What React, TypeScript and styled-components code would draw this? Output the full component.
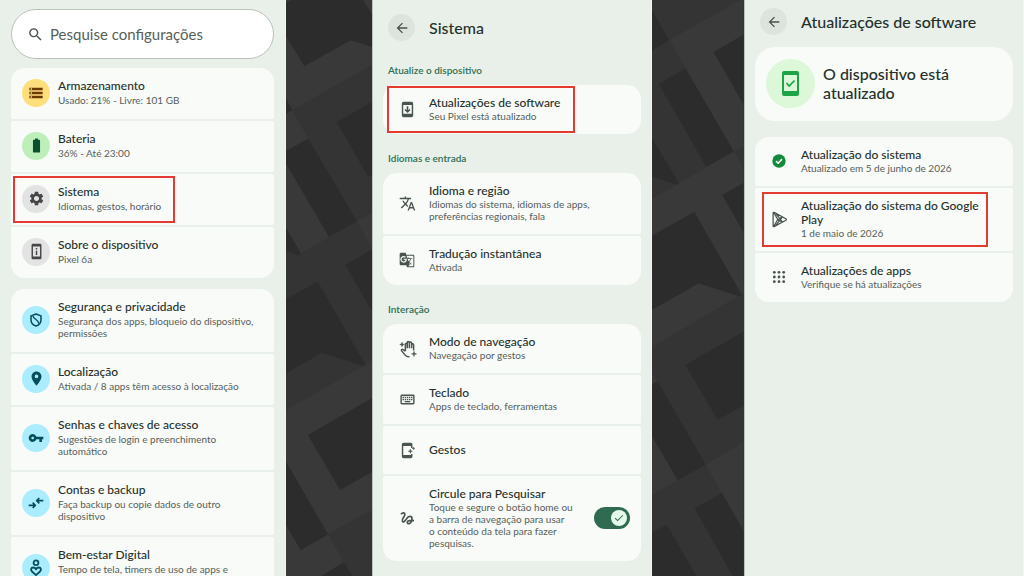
import React from "react";
import styled, { createGlobalStyle, css } from "styled-components";
import {
  MdArrowBack,
  MdBatteryFull,
  MdGTranslate,
  MdOutlineKeyboard,
  MdPermDeviceInformation,
  MdPlace,
  MdSearch,
  MdSettings,
  MdStorage,
  MdTranslate,
  MdVpnKey,
} from "react-icons/md";

const GlobalStyle = createGlobalStyle`
  *, *::before, *::after { box-sizing: border-box; }
  body {
    margin: 0;
    background: #2b2b2b;
    font-family: Lato, "Open Sans", sans-serif;
    color: #26302b;
  }
`;

/* ---------- layout ---------- */

const Page = styled.main`
  display: grid;
  grid-template-columns: 286fr 86fr 280fr 92fr 280fr;
  height: 100vh;
  overflow: hidden;
`;

const Panel = styled.section<{ $top: number; $edge?: boolean }>`
  min-width: 0;
  overflow: hidden;
  background: #e8f0e9;
  padding: ${(p) => p.$top}px ${(p) => (p.$edge ? 10 : 11)}px 0;
  border-right: 1px solid #eff7f0;
  ${(p) => p.$edge && css`border-left: 1px solid #b9c4bc;`}
`;

const Strip = styled.div`
  min-width: 0;
  overflow: hidden;
  svg { display: block; width: 100%; height: 100%; }
`;

/* ---------- search ---------- */

const SearchBox = styled.label`
  display: flex;
  align-items: center;
  gap: 6px;
  height: 50px;
  padding: 0 15px;
  border: 1px solid #b9c1bb;
  border-radius: 25px;
  background: #fff;
  color: #4b554f;
  margin-bottom: 9px;
`;

const SearchInput = styled.input`
  flex: 1;
  min-width: 0;
  padding: 0;
  border: 0;
  outline: 0;
  background: none;
  font: 400 15px/20px Lato, "Open Sans", sans-serif;
  color: inherit;
  &::placeholder { color: #56605a; opacity: 1; }
`;

/* ---------- headers ---------- */

const Header = styled.header`
  display: flex;
  align-items: center;
  gap: 14px;
  padding-left: 5px;
`;

const BackButton = styled.button`
  display: grid;
  place-items: center;
  width: 27px;
  height: 27px;
  padding: 0;
  border: 0;
  border-radius: 50%;
  background: #dce4dd;
  color: #48524c;
`;

const Title = styled.h1`
  margin: 0;
  font-size: 16px;
  line-height: 19px;
  font-weight: 500;
`;

const SectionLabel = styled.h2`
  margin: 18px 0 9px;
  padding-left: 5px;
  font-size: 10px;
  line-height: 12px;
  font-weight: 600;
  color: #2f6e53;
`;

/* ---------- lists ---------- */

const Group = styled.ul`
  display: flex;
  flex-direction: column;
  gap: 2px;
  margin: 0 0 11px;
  padding: 0;
  list-style: none;
`;

const Stack = styled.div`
  display: flex;
  flex-direction: column;
  padding-top: 5px;
  > ul { margin-bottom: 0; }
`;

const Item = styled.li`
  position: relative;
  border-radius: 2px;
  background: #f8fbf8;
  &:first-child {
    border-top-left-radius: 14px;
    border-top-right-radius: 14px;
  }
  &:last-child {
    border-bottom-left-radius: 14px;
    border-bottom-right-radius: 14px;
  }
`;

const rowLayout = css<{ $wide?: boolean }>`
  display: flex;
  align-items: center;
  width: 100%;
  border: 0;
  background: none;
  text-align: left;
  font: inherit;
  color: inherit;
  gap: ${(p) => (p.$wide ? 8 : 14)}px;
  padding: ${(p) => (p.$wide ? "11px 14px 13px 11px" : "11px 11px 12px 16px")};
`;

const RowButton = styled.button<{ $wide?: boolean }>`
  ${rowLayout}
`;

const RowLabel = styled.label<{ $wide?: boolean }>`
  ${rowLayout}
`;

const RowText = styled.span<{ $gap?: boolean }>`
  display: flex;
  flex-direction: column;
  justify-content: center;
  flex: 1;
  min-width: 0;
  min-height: 25px;
  gap: ${(p) => (p.$gap ? 1 : 0)}px;
`;

const RowTitle = styled.span`
  font-size: 12px;
  line-height: 14px;
  font-weight: 500;
`;

const RowSub = styled.span<{ $lines?: number }>`
  min-height: ${(p) => (p.$lines ?? 1) * 12}px;
  font-size: 10px;
  line-height: 12px;
  color: #56605a;
`;

const Plain = styled.span`
  display: grid;
  place-items: center;
  flex: none;
  width: 16px;
  height: 16px;
  color: #4b554f;
`;

const Badge = styled.span<{ $bg: string; $fg: string }>`
  display: grid;
  place-items: center;
  flex: none;
  width: 28px;
  height: 28px;
  margin: -1px 0;
  border-radius: 50%;
  background: ${(p) => p.$bg};
  color: ${(p) => p.$fg};
`;

const Marker = styled.span<{ $x: number; $y: number; $w: number }>`
  position: absolute;
  top: ${(p) => p.$y}px;
  bottom: ${(p) => p.$y}px;
  left: ${(p) => p.$x}px;
  width: ${(p) => p.$w}px;
  border: 2px solid #e53a2f;
  pointer-events: none;
`;

const Switch = styled.input`
  appearance: none;
  position: relative;
  flex: none;
  width: 36px;
  height: 22px;
  margin: 0;
  border-radius: 11px;
  background: #2e6b51;
  &::before {
    content: "";
    position: absolute;
    top: 3px;
    right: 3px;
    width: 16px;
    height: 16px;
    border-radius: 50%;
    background: #e6faec;
  }
  &::after {
    content: "";
    position: absolute;
    top: 8px;
    right: 7px;
    width: 8px;
    height: 4px;
    border: solid #2e6b51;
    border-width: 0 0 1px 1px;
    transform: rotate(-45deg);
  }
`;

const StatusCard = styled.div`
  display: flex;
  align-items: center;
  gap: 8px;
  min-height: 74px;
  margin: 12px 0 16px;
  padding: 10px 11px 12px;
  border-radius: 20px;
  background: #f8fbf8;
`;

const StatusIcon = styled.span`
  display: grid;
  place-items: center;
  flex: none;
  width: 49px;
  height: 49px;
  border-radius: 50%;
  background: #dcf8d8;
`;

const StatusText = styled.p`
  margin: 0;
  max-width: 150px;
  font-size: 16px;
  line-height: 19px;
  font-weight: 500;
`;

/* ---------- icons ---------- */

const Svg = ({ size = 16, children }: { size?: number; children: React.ReactNode }) => (
  <svg
    width={size}
    height={size}
    viewBox="0 0 24 24"
    fill="none"
    stroke="currentColor"
    strokeWidth="2"
    strokeLinejoin="round"
    aria-hidden="true"
  >
    {children}
  </svg>
);

const ShieldIcon = () => (
  <Svg>
    <path d="M12 3 19.500 5.800V11.500C19.500 16 16.500 19.700 12 21C7.500 19.700 4.500 16 4.500 11.500V5.800Z" strokeWidth="2.300" />
    <path d="M7.500 6C8 11 15.500 11 16.500 17.500" />
  </Svg>
);

const TransferIcon = () => (
  <Svg>
    <path d="M1 15.500H10.500M7 11.500 11 15.500 7 19.500M23 8.500H13.500M17 4.500 13 8.500 17 12.500" strokeWidth="2.400" />
  </Svg>
);

const WellbeingIcon = () => (
  <Svg size={18}>
    <circle cx="12" cy="5" r="3.200" strokeWidth="2.400" />
    <path
      d="M12 21.500 7 17C4.500 14.800 5.200 11.300 8.200 11.300C10 11.300 11.300 12.300 12 13.800C12.700 12.300 14 11.300 15.800 11.300C18.800 11.300 19.500 14.800 17 17Z"
      strokeWidth="2.400"
    />
  </Svg>
);

const PhoneUpdateIcon = () => (
  <Svg size={17}>
    <rect x="5" y="2" width="14" height="20" rx="1.500" />
    <path d="M5 4H19M5 19.500H19" strokeWidth="3" />
    <path d="M12 7.500V15M8.500 12 12 15.500 15.500 12" strokeWidth="2.200" />
  </Svg>
);

const HandIcon = () => (
  <Svg size={18}>
    <path
      d="M8.500 15V5.500A1.300 1.300 0 0 1 11 5.500V11M11 11V3.500A1.300 1.300 0 0 1 13.800 3.500V11M13.800 11V4A1.300 1.300 0 0 1 16.800 4V11M16.800 11V6.500A1.300 1.300 0 0 1 19.500 6.500V14M8.500 15 5.500 12.800C4 11.800 2.500 13 3.500 14.500L8.500 20.500C9.500 21.700 11 22.500 14 22.300"
      strokeWidth="2"
    />
    <path
      d="M4 3 4.900 5.100 7 6 4.900 6.900 4 9 3.100 6.900 1 6 3.100 5.100ZM20 15 20.900 17.600 23.500 18.500 20.900 19.400 20 22 19.100 19.400 16.500 18.500 19.100 17.600Z"
      fill="currentColor"
      strokeWidth="0.600"
    />
  </Svg>
);

const PhoneGestureIcon = () => (
  <Svg size={17}>
    <path d="M18 8.500V3.500A1.500 1.500 0 0 0 16.500 2H6.500A1.500 1.500 0 0 0 5 3.500V20.500A1.500 1.500 0 0 0 6.500 22H16.500A1.500 1.500 0 0 0 18 20.500V17" />
    <path d="M5 4H18M5 20H18" strokeWidth="3" />
    <path
      d="M16 10 16.900 12.300 19 13 16.900 13.800 16 16 15.100 13.800 13 13 15.100 12.300ZM20.500 7 21 8.500 22.500 9 21 9.500 20.500 11 20 9.500 18.500 9 20 8.500Z"
      fill="currentColor"
      strokeWidth="0.600"
    />
  </Svg>
);

const ScribbleIcon = () => (
  <Svg size={16}>
    <path
      d="M3 6.500C5 4 8.500 3.500 8.800 6.500C9 9.500 4 13 5 16.500C6 19.500 9.500 16.500 11.500 13C14 8.500 19.500 8.500 19.500 13C19.500 17.500 16.500 21 14 20.500C11.500 20 12 16 16 16H22.500"
      strokeWidth="2.600"
    />
  </Svg>
);

const PlayIcon = () => (
  <Svg size={17}>
    <path
      d="M3 3C3 2 4 1.800 5 2.300L21 11C22 11.600 22 12.400 21 13L5 21.700C4 22.200 3 22 3 21ZM4 2.500 9.500 12 4 21.500M9.500 12 16 8.500M9.500 12 16 15.500M7 4 16 15.500M7 20 16 8.500"
      strokeWidth="1.800"
    />
  </Svg>
);

const CheckBadgeIcon = () => (
  <Svg size={16}>
    <circle cx="12" cy="12" r="10" fill="#128a3a" stroke="none" />
    <path d="M7.500 12.300 10.700 15.300 16.500 9.200" stroke="#fff" strokeWidth="2.400" />
  </Svg>
);

const AppsIcon = () => (
  <Svg size={16}>
    {[5, 12, 19].map((y) =>
      [5, 12, 19].map((x) => (
        <circle key={`${x}-${y}`} cx={x} cy={y} r="2.100" fill="currentColor" stroke="none" />
      )),
    )}
  </Svg>
);

const PhoneCheckIcon = () => (
  <svg width="17" height="27" viewBox="0 0 17 27" aria-hidden="true">
    <rect x="0" y="1" width="17" height="25" rx="2" fill="#1ea446" />
    <rect x="2" y="5" width="13" height="16" fill="#dcf8d8" />
    <path d="M4.500 13.200 7.200 16 12.500 10.500" fill="none" stroke="#1ea446" strokeWidth="1.800" />
  </svg>
);

/* ---------- backdrop art ---------- */

const Art = ({ box, light, dark }: { box: string; light: string; dark: string }) => (
  <Strip aria-hidden="true">
    <svg viewBox={box} preserveAspectRatio="xMinYMin slice">
      <rect width="400" height="1728" fill="#343434" />
      <path d={light} fill="#393939" />
      <path d={dark} fill="#2c2c2c" />
    </svg>
  </Strip>
);

const LEFT_LIGHT =
  "M18 0H36L18 8ZM250 0H276V44ZM18 108 73 198 212 121 276 140V194L37 330 18 296ZM18 341 37 330 85 416 18 453ZM18 490 147 711 62 760 18 683ZM276 638 231 664 276 745ZM18 1230 276 1084V1195L84 1305 180 1470 276 1415V1530L144 1603 18 1385ZM18 1574 62 1650 144 1603 192 1687 124 1728H18Z";
const LEFT_DARK =
  "M18 8 36 0H250L276 44V140L212 121 73 198 18 108ZM276 306 170 366 265 531 276 525ZM18 453 85 416 231 664 147 711 18 490ZM18 296 37 330 18 341ZM18 683 62 760 57 767 18 753ZM276 748 196 795 276 934ZM18 898 113 845 257 1095 250 1098 127 1058 18 1120ZM84 1305 276 1195V1415L180 1470ZM18 1385 144 1603 62 1650 18 1574ZM192 1687 217 1728H124Z";
const RIGHT_LIGHT =
  "M72 120 285 0H294V105L205 156 294 312V440L265 454ZM20 597 265 454 294 504V549L231 585 294 696V880L290 886 147 636 20 707ZM20 929 160 850 280 888 20 1040ZM20 1118 37 1144 20 1152ZM20 1308 97 1440 20 1486ZM294 1326 181 1394 230 1479 294 1592Z";
const RIGHT_DARK =
  "M20 31 72 120 20 151ZM294 105 205 156 294 312ZM120 205 265 454 183 501 40 252ZM20 413 100 549 94 554 20 530ZM294 549 231 585 294 696ZM20 707 147 636 290 886 280 888 160 850 20 929ZM294 995 120 1095 217 1260 294 1216ZM20 1152 37 1144 181 1394 97 1440 20 1308ZM230 1479 147 1525 262 1728H294V1592ZM20 1598 64 1574 153 1728H20Z";

/* ---------- rows ---------- */

type RowProps = {
  icon: React.ReactNode;
  title: string;
  sub?: string;
  lines?: number;
  tint?: [string, string];
  marker?: [number, number, number];
};

const Row = ({ icon, title, sub, lines, tint, marker }: RowProps) => (
  <Item>
    <RowButton type="button" $wide={!!tint}>
      {tint ? (
        <Badge $bg={tint[0]} $fg={tint[1]}>{icon}</Badge>
      ) : (
        <Plain>{icon}</Plain>
      )}
      <RowText $gap={!!tint}>
        <RowTitle>{title}</RowTitle>
        {sub && <RowSub $lines={lines}>{sub}</RowSub>}
      </RowText>
    </RowButton>
    {marker && <Marker $x={marker[0]} $y={marker[1]} $w={marker[2]} />}
  </Item>
);

const BLUE: [string, string] = ["#abedff", "#064e5c"];
const GREY: [string, string] = ["#e2e3e2", "#444746"];

export default function App() {
  return (
    <>
      <GlobalStyle />
      <Page>
        <Panel $top={9}>
          <SearchBox>
            <MdSearch size={17} />
            <SearchInput type="search" placeholder="Pesquise configurações" aria-label="Pesquise configurações" />
          </SearchBox>
          <Group>
            <Row icon={<MdStorage size={16} />} title="Armazenamento" sub="Usado: 21% - Livre: 101 GB" tint={["#ffdf7c", "#6b3a00"]} />
            <Row icon={<MdBatteryFull size={17} />} title="Bateria" sub="36% - Até 23:00" tint={["#beefbb", "#0b5130"]} />
            <Row icon={<MdSettings size={17} />} title="Sistema" sub="Idiomas, gestos, horário" tint={GREY} marker={[2, 2, 162]} />
            <Row icon={<MdPermDeviceInformation size={17} />} title="Sobre o dispositivo" sub="Pixel 6a" tint={GREY} />
          </Group>
          <Group>
            <Row icon={<ShieldIcon />} title="Segurança e privacidade" sub="Segurança dos apps, bloqueio do dispositivo, permissões" tint={BLUE} />
            <Row icon={<MdPlace size={17} />} title="Localização" sub="Ativada / 8 apps têm acesso à localização" tint={BLUE} />
            <Row icon={<MdVpnKey size={16} />} title="Senhas e chaves de acesso" sub="Sugestões de login e preenchimento automático" tint={BLUE} />
            <Row icon={<TransferIcon />} title="Contas e backup" sub="Faça backup ou copie dados de outro dispositivo" tint={BLUE} />
            <Row icon={<WellbeingIcon />} title="Bem-estar Digital" sub="Tempo de tela, timers de uso de apps e" lines={2} tint={BLUE} />
          </Group>
        </Panel>

        <Art box="18 0 258 1728" light={LEFT_LIGHT} dark={LEFT_DARK} />

        <Panel $top={14} $edge>
          <Header>
            <BackButton type="button" aria-label="Voltar"><MdArrowBack size={16} /></BackButton>
            <Title>Sistema</Title>
          </Header>
          <Stack>
            <SectionLabel>Atualize o dispositivo</SectionLabel>
            <Group>
              <Row icon={<PhoneUpdateIcon />} title="Atualizações de software" sub="Seu Pixel está atualizado" marker={[4, 1, 188]} />
            </Group>
            <SectionLabel>Idiomas e entrada</SectionLabel>
            <Group>
              <Row icon={<MdTranslate size={17} />} title="Idioma e região" sub="Idiomas do sistema, idiomas de apps, preferências regionais, fala" />
              <Row icon={<MdGTranslate size={16} />} title="Tradução instantânea" sub="Ativada" />
            </Group>
            <SectionLabel>Interação</SectionLabel>
            <Group>
              <Row icon={<HandIcon />} title="Modo de navegação" sub="Navegação por gestos" />
              <Row icon={<MdOutlineKeyboard size={17} />} title="Teclado" sub="Apps de teclado, ferramentas" />
              <Row icon={<PhoneGestureIcon />} title="Gestos" />
              <Item>
                <RowLabel>
                  <Plain><ScribbleIcon /></Plain>
                  <RowText>
                    <RowTitle>Circule para Pesquisar</RowTitle>
                    <RowSub>
                      {"Toque e segure o botão home ou a barra de navegação para usar o\u00a0conteúdo da tela para fazer pesquisas."}
                    </RowSub>
                  </RowText>
                  <Switch type="checkbox" role="switch" defaultChecked />
                </RowLabel>
              </Item>
            </Group>
          </Stack>
        </Panel>

        <Art box="20 0 276 1728" light={RIGHT_LIGHT} dark={RIGHT_DARK} />

        <Panel $top={8} $edge>
          <Header>
            <BackButton type="button" aria-label="Voltar"><MdArrowBack size={16} /></BackButton>
            <Title>Atualizações de software</Title>
          </Header>
          <StatusCard>
            <StatusIcon><PhoneCheckIcon /></StatusIcon>
            <StatusText>O dispositivo está atualizado</StatusText>
          </StatusCard>
          <Group>
            <Row icon={<CheckBadgeIcon />} title="Atualização do sistema" sub="Atualizado em 5 de junho de 2026" />
            <Row icon={<PlayIcon />} title="Atualização do sistema do Google Play" sub="1 de maio de 2026" marker={[7, 4, 226]} />
            <Row icon={<AppsIcon />} title="Atualizações de apps" sub="Verifique se há atualizações" />
          </Group>
        </Panel>
      </Page>
    </>
  );
}
